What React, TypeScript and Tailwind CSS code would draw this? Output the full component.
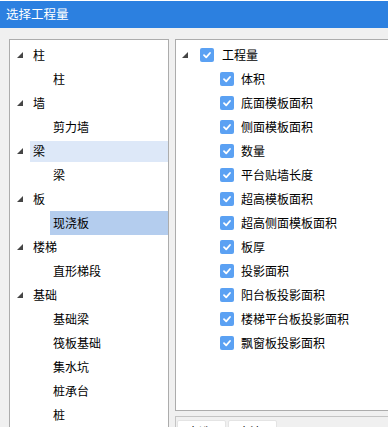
import React from "react";

const font = { fontFamily: '"Noto Sans CJK SC", "Noto Sans", sans-serif' };

type Node = { label: string; children: string[] };

const tree: Node[] = [
	{ label: "柱", children: ["柱"] },
	{ label: "墙", children: ["剪力墙"] },
	{ label: "梁", children: ["梁"] },
	{ label: "板", children: ["现浇板"] },
	{ label: "楼梯", children: ["直形梯段"] },
	{ label: "基础", children: ["基础梁", "筏板基础", "集水坑", "桩承台", "桩"] },
];

const quantities = [
	"体积",
	"底面模板面积",
	"侧面模板面积",
	"数量",
	"平台贴墙长度",
	"超高模板面积",
	"超高侧面模板面积",
	"板厚",
	"投影面积",
	"阳台板投影面积",
	"楼梯平台板投影面积",
	"飘窗板投影面积",
];

function Arrow() {
	return (
		<svg width="6" height="6" viewBox="0 0 6 6" className="shrink-0">
			<polygon points="6,0 6,6 0,6" fill="#454545" />
		</svg>
	);
}

function Check() {
	return (
		<span className="w-[14px] h-[14px] rounded-[2px] bg-[#5ba1f3] flex items-center justify-center shrink-0">
			<svg width="10" height="10" viewBox="0 0 10 10">
				<path d="M2 5.2 L4.2 7.3 L8 3" fill="none" stroke="#fff" strokeWidth="1.8" strokeLinecap="round" strokeLinejoin="round" />
			</svg>
		</span>
	);
}

export default function App() {
	return (
		<div className="w-[388px] h-[427px] overflow-hidden bg-[#f0f0f0] text-[12px] text-black" style={font}>
			{/* window title */}
			<div className="h-px bg-white" />
			<div className="h-[27px] bg-[#2c80e0] text-white flex items-center pl-[6px] text-[12.5px]">选择工程量</div>

			<div className="flex gap-[6px] pl-[9px] pt-[11px]">
				{/* component tree */}
				<div className="w-[160px] h-[400px] shrink-0 bg-white border border-[#acacac] pt-[3px]">
					{tree.map((node) => (
						<div key={node.label}>
							<div className="h-[24px] flex items-center pl-[7px]">
								<Arrow />
								<span
									className={
										node.label === "梁"
											? "flex-1 ml-[7px] h-[21px] flex items-center pl-[3px] bg-[#dde8f8]"
											: "flex-1 ml-[7px] h-[21px] flex items-center pl-[3px]"
									}
								>
									{node.label}
								</span>
							</div>
							{node.children.map((c) => (
								<div key={c} className="h-[24px] flex items-center pl-[40px]">
									<span
										className={
											node.label === "板"
												? "flex-1 h-[24px] flex items-center pl-[3px] bg-[#b4cdee]"
												: "flex-1 h-[24px] flex items-center pl-[3px]"
										}
									>
										{c}
									</span>
								</div>
							))}
						</div>
					))}
				</div>

				{/* quantity list */}
				<div className="w-[240px] shrink-0 flex flex-col gap-[5px]">
					<div className="h-[372px] bg-white border border-[#acacac] pt-[3px]">
						<div className="h-[24px] flex items-center pl-[6px]">
							<Arrow />
							<span className="ml-[12px]">
								<Check />
							</span>
							<span className="ml-[8px]">工程量</span>
						</div>
						{quantities.map((q) => (
							<div key={q} className="h-[24px] flex items-center pl-[44px]">
								<Check />
								<span className="ml-[7px]">{q}</span>
							</div>
						))}
					</div>
					<div className="h-[40px] bg-[#f0f0f0] border border-[#c4c4c4] flex gap-[2px] pl-[1px] pt-[3px]">
						<div className="w-[49px] h-[24px] bg-white border border-[#e4e4e4] rounded-[2px] pl-[9px] pt-[2px]">全选</div>
						<div className="w-[49px] h-[24px] bg-white border border-[#e4e4e4] rounded-[2px] pl-[9px] pt-[2px]">全清</div>
					</div>
				</div>
			</div>
		</div>
	);
}
